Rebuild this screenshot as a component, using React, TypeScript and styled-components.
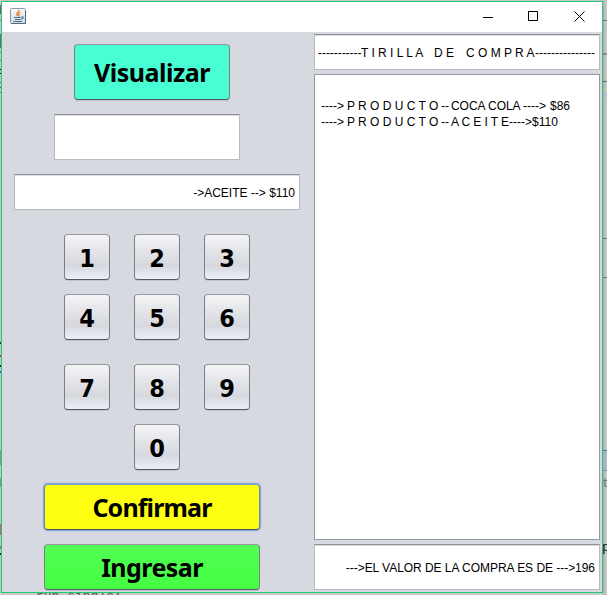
import React from 'react';
import styled, { createGlobalStyle, css } from 'styled-components';

const GlobalStyle = createGlobalStyle`
  * { box-sizing: border-box; }
  body { margin: 0; overflow: hidden; background: #cfcfcf; }
`;

const Desktop = styled.div`
  position: relative;
  width: 607px;
  height: 595px;
  padding: 1px;
  overflow: hidden;
  background: #d0d0d0;
`;

const Strip = styled.div<{ $side: 'left' | 'right' }>`
  position: absolute;
  top: 0;
  bottom: 0;
  ${(p) =>
    p.$side === 'left'
      ? css`
          left: 0;
          width: 1px;
        `
      : css`
          right: 0;
          width: 4px;
          background: linear-gradient(90deg, #b4b4b4, #cbcbcb);
        `}
`;

const Mark = styled.i<{ $y: number; $h: number; $c: string }>`
  position: absolute;
  left: 0;
  right: 0;
  top: ${(p) => p.$y}px;
  height: ${(p) => p.$h}px;
  background: ${(p) => p.$c};
`;

const Behind = styled.span<{ $x: number; $y: number; $c: string }>`
  position: absolute;
  left: ${(p) => p.$x}px;
  top: ${(p) => p.$y}px;
  font: 13px/13px 'Liberation Mono', monospace;
  color: ${(p) => p.$c};
`;

const Window = styled.main`
  position: relative;
  display: flex;
  flex-direction: column;
  width: 602px;
  height: 592px;
  border: 1px solid #22c878;
  background: #d6d9e0;
  box-shadow: 0 0 2px rgba(0, 0, 0, 0.15);
`;

const TitleBar = styled.header`
  display: flex;
  justify-content: space-between;
  height: 30px;
  padding: 6px 17px 0 8px;
  background: #fff;
`;

const Controls = styled.div`
  display: flex;
  gap: 35px;
  padding-top: 3px;
`;

const Body = styled.div`
  display: flex;
  justify-content: space-between;
  padding: 2px 2px 0 12px;
`;

const Left = styled.section`
  display: flex;
  flex-direction: column;
  width: 286px;
  padding-top: 10px;
`;

const Right = styled.section`
  display: flex;
  flex-direction: column;
  gap: 4px;
  width: 286px;
`;

const Button = styled.button<{ $fill?: string; $w: number; $h?: number; $focus?: boolean }>`
  display: flex;
  align-items: center;
  justify-content: center;
  width: ${(p) => p.$w}px;
  height: ${(p) => p.$h ?? 46}px;
  margin: 0;
  padding: 3px 0 0;
  border: 1px solid;
  border-color: #96989d #7c7e84 #55585e;
  border-radius: 4px;
  background: ${(p) => p.$fill ?? 'linear-gradient(#f5f5f7, #e4e5e9 35%, #d6d8de 70%, #eceff8)'};
  box-shadow: ${(p) => (p.$focus ? '0 0 0 1px #84a8d2, 0 0 2px 1px #9fb8d8' : '0 1px 0 #c0c3ca')};
  ${(p) => p.$focus && 'border-color: #6f9dc9 #6c8aa8 #4a555c;'}
  color: #000;
  font: bold 25px/30px 'DejaVu Sans Condensed', 'DejaVu Sans', sans-serif;
  font-stretch: condensed;
`;

const Label = styled.span<{ $ls?: number }>`
  margin-top: -3px;
  font-family: 'Noto Sans', sans-serif;
  font-stretch: normal;
  letter-spacing: ${(p) => p.$ls ?? 0}px;
`;

const Field = styled.output<{ $h: number; $left?: boolean; $ls?: number }>`
  display: flex;
  align-items: center;
  justify-content: ${(p) => (p.$left ? 'flex-start' : 'flex-end')};
  width: 100%;
  height: ${(p) => p.$h}px;
  padding: 2px 4px 0 3px;
  border: 1px solid #b9babd;
  border-top-color: #8f9093;
  background: #fff;
  box-shadow: inset 0 1px 0 #dadbdd;
  color: #000;
  font: 12px/16px 'Liberation Sans', Arial, sans-serif;
  letter-spacing: ${(p) => p.$ls ?? 0}px;
  white-space: pre;
`;

const CodeSlot = styled.div`
  width: 186px;
  margin: 14px 0 14px 40px;
`;

const Keypad = styled.div`
  display: grid;
  grid-template-columns: repeat(3, 46px);
  grid-template-rows: 46px 56px 46px 46px;
  column-gap: 24px;
  row-gap: 14px;
  margin: 24px 0 14px 50px;
`;

const Actions = styled.div`
  display: flex;
  flex-direction: column;
  gap: 14px;
  margin-left: 30px;
`;

const Display = styled.div`
  margin-left: 60px;
`;

const Receipt = styled.div`
  height: 466px;
  padding: 23px 6px;
  border: 1px solid #9597a1;
  background: #fff;
  color: #000;
  font: 12px/16px 'Liberation Sans', Arial, sans-serif;
`;

const Line = styled.div`
  display: flex;
  white-space: pre;
`;

const Run = styled.span<{ $w: number; $ls?: number }>`
  width: ${(p) => p.$w}px;
  letter-spacing: ${(p) => p.$ls ?? 0}px;
  white-space: pre;
`;

const JavaIcon = () => (
  <svg width="16" height="16" viewBox="0 0 16 16">
    <defs>
      <linearGradient id="tile" x1="0" y1="0" x2="0" y2="1">
        <stop offset="0" stopColor="#fafafa" />
        <stop offset="1" stopColor="#cfdae4" />
      </linearGradient>
    </defs>
    <rect x=".5" y=".5" width="15" height="15" rx="1" fill="url(#tile)" stroke="#8999a8" />
    <path d="M1 15.5h14.5V3" fill="none" stroke="#536b80" />
    <path d="M8.8 2.2c.5 2-3 2.700-2 4.500l1 1.300M10.500 4.500C8 5.500 8.200 6.300 9 7.200l-.5 1.300" fill="none" stroke="#ec7d24" strokeWidth="1.300" />
    <path d="M4 9.500h7M5 11.500h5.500M3.500 13.500h8.500M11.500 8.800c2.500-.5 2 2-.3 2.400" fill="none" stroke="#4c6e8c" strokeWidth="1.200" />
  </svg>
);

const keys: [string, number, number][] = [
  ['1', 1, 1], ['2', 1, 2], ['3', 1, 3],
  ['4', 2, 1], ['5', 2, 2], ['6', 2, 3],
  ['7', 3, 1], ['8', 3, 2], ['9', 3, 3],
  ['0', 4, 2],
];

const Cell = styled.div<{ $r: number; $c: number }>`
  grid-row: ${(p) => p.$r};
  grid-column: ${(p) => p.$c};
`;

const leftMarks: [number, number, string][] = [
  [5, 9, '#8d5c6c'], [20, 1, '#888'], [34, 14, '#70747a'], [52, 1, '#888'], [60, 1, '#888'],
  [69, 1, '#111'], [73, 1, '#111'], [82, 1, '#777'], [87, 1, '#4466a0'], [92, 1, '#777'],
  [342, 2, '#333'], [355, 2, '#c33'], [365, 2, '#222'], [371, 2, '#3a66c0'],
  [450, 15, '#9b9e90'], [478, 9, '#999b8d'], [524, 11, '#e06060'], [546, 3, '#9d8350'], [553, 2, '#222'],
];
const rightMarks: [number, number, string][] = [
  [20, 1, '#777'], [53, 2, '#888'], [81, 1, '#666'], [94, 3, '#b8b6d4'],
  [238, 1, '#777'], [277, 1, '#777'], [450, 1, '#4d81ac'], [451, 19, '#abb7c4'], [470, 1, '#858b91'],
];

export default function App() {
  return (
    <Desktop>
      <GlobalStyle />
      <Strip $side="left">{leftMarks.map(([y, h, c]) => <Mark key={y} $y={y} $h={h} $c={c} />)}</Strip>
      <Strip $side="right">{rightMarks.map(([y, h, c]) => <Mark key={y} $y={y} $h={h} $c={c} />)}</Strip>
      <Behind $x={36} $y={590} $c="#555">run-single:</Behind>
      <Behind $x={602} $y={477} $c="#777">t</Behind>
      <Behind $x={602} $y={541} $c="#111">p</Behind>
      <Window>
        <TitleBar>
          <JavaIcon />
          <Controls>
            <svg width="10" height="10" viewBox="0 0 10 10"><path d="M0 6.500h10" stroke="#000" /></svg>
            <svg width="10" height="10" viewBox="0 0 10 10"><path d="M.5 .5h9v9h-9z" fill="none" stroke="#000" /></svg>
            <svg width="12" height="11" viewBox="-1 0 12 11"><path d="M.5 .5l10 10M10.500 .5l-10 10" stroke="#000" /></svg>
          </Controls>
        </TitleBar>
        <Body>
          <Left>
            <Display><Button $w={156} $h={56} $fill="#48ffd4"><Label $ls={-0.5}>Visualizar</Label></Button></Display>
            <CodeSlot><Field $h={46} /></CodeSlot>
            <Field $h={36}>-&gt;ACEITE --&gt; $110</Field>
            <Keypad>
              {keys.map(([k, r, c]) => (
                <Cell key={k} $r={r} $c={c}><Button $w={46}>{k}</Button></Cell>
              ))}
            </Keypad>
            <Actions>
              <Button $w={216} $fill="#ffff14" $focus><Label $ls={-0.85}>Confirmar</Label></Button>
              <Button $w={216} $fill="linear-gradient(#52ff52, #44ff44)"><Label $ls={-0.55}>Ingresar</Label></Button>
            </Actions>
          </Left>
          <Right>
            <Field $h={36} $left>
              <Run $w={43} $ls={-0.05}>-----------</Run>
              <Run $w={73}>T I R I L L A</Run>
              <Run $w={32}>D E</Run>
              <Run $w={69}>C O M P R A</Run>
              <Run $w={60}>---------------</Run>
            </Field>
            <Receipt>
              <Line><Run $w={26}>----&gt;</Run><Run $w={94}>P R O D U C T O</Run><Run $w={10}>--</Run><Run $w={72} $ls={-0.05}>COCA COLA</Run><Run $w={27}>----&gt;</Run><Run $w={24}>$86</Run></Line>
              <Line><Run $w={26}>----&gt;</Run><Run $w={94}>P R O D U C T O</Run><Run $w={10}>--</Run><Run $w={58} $ls={-0.1}>A C E I T E</Run><Run $w={23}>----&gt;</Run><Run $w={30}>$110</Run></Line>
            </Receipt>
            <Field $h={46} $ls={-0.04}>---&gt;EL VALOR DE LA COMPRA ES DE ---&gt;196</Field>
          </Right>
        </Body>
      </Window>
    </Desktop>
  );
}
